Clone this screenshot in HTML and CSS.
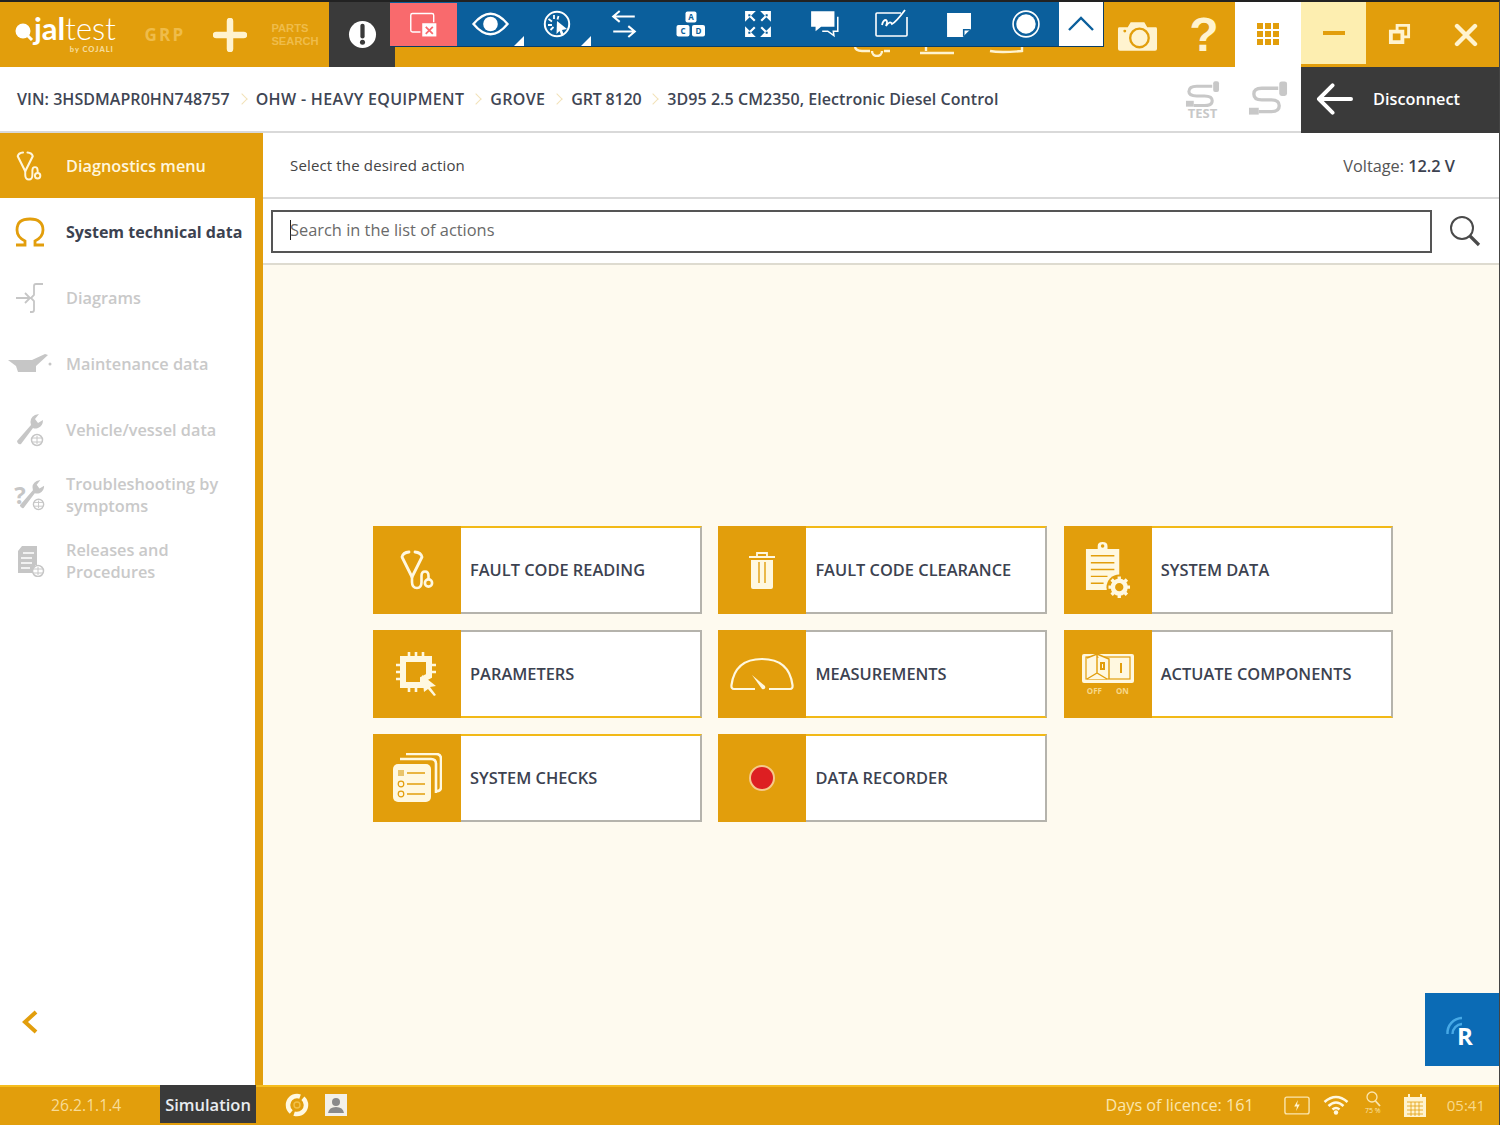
FILE: index.html
```html
<!DOCTYPE html>
<html lang="en">
<head>
<meta charset="utf-8">
<title>Jaltest</title>
<link rel="stylesheet" href="styles.css">
</head>
<body>
<svg class="defs" aria-hidden="true">
  <symbol id="stetho" viewBox="0 0 34 40">
    <path d="M2 7 Q3 2.500 9 2 M15 2 Q21 2.500 22 7 L12 27 L2 7" fill="none" stroke="currentColor" stroke-width="2.800" stroke-linejoin="round" stroke-linecap="round"/>
    <path d="M12 27 V32 Q12 38 17 38 Q21.500 38 21.500 32 V26 Q21.500 21.500 25 21.500 Q28.500 21.500 28.500 26 V29" fill="none" stroke="currentColor" stroke-width="2.600"/>
    <circle cx="28.500" cy="33" r="3.600" fill="none" stroke="currentColor" stroke-width="2.600"/>
  </symbol>
  <symbol id="wrench" viewBox="0 0 30 34">
    <path d="M2 28 L16 12 Q14 5 20 2 L24 1 L20 6 L23 10 L28 7 Q28 13 23 15 Q20 16 18 15 L6 31 Q3 32 2 28 Z" fill="currentColor"/>
    <circle cx="22" cy="27" r="5.500" fill="#fff" stroke="currentColor" stroke-width="1.500"/>
    <path d="M17 25 H27 M17 29 H27 M22 23 V31" stroke="currentColor" stroke-width="1"/>
  </symbol>
</svg>
<div class="app">
  <header class="topbar">
    <div class="logo">
      <svg class="logo-pin" viewBox="0 0 20 20"><circle cx="9" cy="9" r="7.500" fill="#fff"/><path d="M13 13 L18 18" stroke="#fff" stroke-width="3"/></svg>
      <div class="logo-words">
        <div class="logo-name"><b>jal</b>test</div>
        <div class="logo-by">by COJALI</div>
      </div>
    </div>
    <div class="top-cell grp">GRP</div>
    <div class="top-cell plus">
      <svg class="icon-plus" viewBox="0 0 34 34"><path d="M17 3 V31 M3 17 H31" stroke="#fff3cf" stroke-width="6.500" stroke-linecap="round"/></svg>
    </div>
    <div class="top-cell parts">PARTS<br>SEARCH</div>
    <div class="top-cell alert">
      <svg class="icon-alert" viewBox="0 0 30 30"><circle cx="15" cy="15" r="14" fill="#fff"/><path d="M15 6 V17" stroke="#3a3a3a" stroke-width="4.400" stroke-linecap="round"/><circle cx="15" cy="23" r="2.600" fill="#3a3a3a"/></svg>
    </div>
    <div class="top-spacer"></div>
    <div class="top-cell">
      <svg class="icon-camera" viewBox="0 0 42 32"><path d="M2 7 H11 L14 2 H28 L31 7 H40 Q41 7 41 9 V29 Q41 31 39 31 H3 Q1 31 1 29 V9 Q1 7 2 7 Z" fill="#fff3cf"/><circle cx="23" cy="18" r="9.500" fill="#fff3cf" stroke="#e29e0c" stroke-width="2.400"/><circle cx="8" cy="11" r="1.500" fill="#e29e0c"/></svg>
    </div>
    <div class="top-cell help">?</div>
    <div class="top-cell apps">
      <svg class="icon-apps" viewBox="0 0 24 24"><path d="M1 1h6v6H1zM9 1h6v6H9zM17 1h6v6h-6zM1 9h6v6H1zM9 9h6v6H9zM17 9h6v6h-6zM1 17h6v6H1zM9 17h6v6H9zM17 17h6v6h-6z" fill="#e29e0c"/></svg>
    </div>
    <div class="top-cell win-min"><span class="min-dash"></span></div>
    <div class="top-cell">
      <svg class="icon-restore" viewBox="0 0 24 24"><path d="M8 1 H23 V16 H17 V22 H1 V7 H8 Z" fill="#fff3cf"/><path d="M11 4 H20 V13 H17 V7 H11 Z M5 11 H13 V18 H5 Z" fill="#e29e0c"/></svg>
    </div>
    <div class="top-cell win-close">
      <svg class="icon-close" viewBox="0 0 24 24"><path d="M3 3 L21 21 M21 3 L3 21" stroke="#fff3cf" stroke-width="4.400" stroke-linecap="round"/></svg>
    </div>
    <svg class="peek" viewBox="0 0 180 12"><path d="M5 1 Q5 6 12 6 H20 M22 6 a5 5 0 0 0 10 0 M34 6 H40 M70 8 H104 M76 1 V6 M140 6 Q150 8 172 6 V1" fill="none" stroke="#fff3cf" stroke-width="2.400"/></svg>
    <nav class="toolbar">
      <div class="tool tool-red">
        <svg class="icon-tool" viewBox="0 0 34 30"><path d="M13 23 H4 Q2 23 2 21 V4 Q2 2 4 2 H26 Q28 2 28 4 V12" fill="none" stroke="#fff" stroke-width="1.600"/><rect x="15" y="13" width="16" height="15" fill="#fff"/><path d="M19 17 L27 25 M27 17 L19 25" stroke="#f96a6d" stroke-width="2"/></svg>
      </div>
      <div class="tool tool-corner">
        <svg class="icon-eye" viewBox="0 0 38 26"><path d="M1.500 13 Q19 -8 36.500 13 Q19 34 1.500 13 Z" fill="none" stroke="#fff" stroke-width="2.400"/><circle cx="19" cy="13" r="7.500" fill="#fff"/></svg>
      </div>
      <div class="tool tool-corner">
        <svg class="icon-tool" viewBox="0 0 28 28"><circle cx="14" cy="14" r="12.200" fill="none" stroke="#fff" stroke-width="2"/><path d="M14 11 L24 19 L19 20 L21 25 L18.500 26 L16.500 21 L13.500 24 Z" fill="#fff"/><path d="M11 5 V9 M5.500 9 L9 11.500 M5 15 H9 M7.500 20 L10.500 17 M15.500 6 L14.500 9.500" stroke="#fff" stroke-width="1.800"/></svg>
      </div>
      <div class="tool">
        <svg class="icon-tool" viewBox="0 0 24 26"><path d="M22 6 H3 M8 1 L2 6 L8 11 M2 20 H21 M16 15 L22 20 L16 25" fill="none" stroke="#fff" stroke-width="1.900"/></svg>
      </div>
      <div class="tool">
        <svg class="icon-abc" viewBox="0 0 30 26">
          <rect x="9.500" y="0.500" width="11" height="11" rx="2" fill="#fff"/><rect x="0.500" y="14" width="13" height="11.500" rx="2" fill="#fff"/><rect x="16" y="14" width="13" height="11.500" rx="2" fill="#fff"/>
          <text x="15" y="9" class="abc-text">A</text><text x="7" y="23" class="abc-text">C</text><text x="22.500" y="23" class="abc-text">D</text>
        </svg>
      </div>
      <div class="tool">
        <svg class="icon-tool" viewBox="0 0 26 26"><path d="M2 2 L10 10 M24 2 L16 10 M2 24 L10 16 M24 24 L16 16" stroke="#fff" stroke-width="2"/><path d="M1 11 V1 H11 Z M25 11 V1 H15 Z M1 15 V25 H11 Z M25 15 V25 H15 Z" fill="#fff"/><path d="M5 4 V5 H4 M21 4 V5 H22 M5 22 V21 H4 M21 22 V21 H22" stroke="#0b5f9c" stroke-width="1.800" fill="none"/></svg>
      </div>
      <div class="tool">
        <svg class="icon-tool" viewBox="0 0 27 25"><path d="M1 1 H22 V15 H10 L5 19 V15 H1 Z" fill="#fff"/><path d="M25 6 V19 H21 L21.500 23 L16 19 H11" fill="none" stroke="#fff" stroke-width="1.400"/></svg>
      </div>
      <div class="tool">
        <svg class="icon-sign" viewBox="0 0 33 29"><path d="M26 5 H2 Q1 5 1 6 V27 Q1 28 2 28 H31 Q32 28 32 27 V9" fill="none" stroke="#fff" stroke-width="1.600"/><path d="M7 17 Q8 12 11 12 Q13 13 11 18 Q15 12 17 16 Q21 14 30 2" fill="none" stroke="#fff" stroke-width="1.800"/></svg>
      </div>
      <div class="tool">
        <svg class="icon-note" viewBox="0 0 24 24"><path d="M1 1 H24 V16 L16 24 H1 Z" fill="#fff"/><path d="M17 23 V17 H23" fill="none" stroke="#0b5f9c" stroke-width="1.500"/></svg>
      </div>
      <div class="tool">
        <svg class="icon-rec" viewBox="0 0 26 26"><circle cx="13" cy="13" r="12" fill="none" stroke="#fff" stroke-width="1.500"/><circle cx="13" cy="13" r="9" fill="#fff"/></svg>
      </div>
      <div class="tool tool-up">
        <svg class="icon-up" viewBox="0 0 28 16"><path d="M2 14 L14 2 L26 14" fill="none" stroke="#0b5f9c" stroke-width="2.400"/></svg>
      </div>
    </nav>
  </header>

  <div class="crumbbar">
    <div class="crumbs">
      <span>VIN: 3HSDMAPR0HN748757</span><i class="chev"></i>
      <span class="crumb-wide">OHW - HEAVY EQUIPMENT</span><i class="chev"></i>
      <span class="crumb-wide">GROVE</span><i class="chev"></i>
      <span class="crumb-tight">GRT 8120</span><i class="chev"></i>
      <span>3D95 2.5 CM2350, Electronic Diesel Control</span>
    </div>
    <div class="plugs">
      <div class="plug-test">
        <svg class="icon-plug" viewBox="0 0 36 26"><path d="M28 5 H12 Q4 5 4 10.500 Q4 15 12 15 H20 Q28 15 28 20 Q28 25 20 25 H9" fill="none" stroke="#c8c8c8" stroke-width="3.200"/><rect x="29" y="0" width="6" height="11" rx="2" fill="#c8c8c8"/><rect x="1" y="20" width="8" height="6" fill="#c8c8c8"/></svg>
        <span class="plug-label">TEST</span>
      </div>
      <svg class="icon-plug2" viewBox="0 0 42 36"><path d="M31 8 H14 Q6 8 6 14 Q6 20 14 20 H24 Q32 20 32 26 Q32 32 24 32 H11" fill="none" stroke="#c8c8c8" stroke-width="3.400"/><rect x="32" y="1" width="8" height="15" rx="2.500" fill="#c8c8c8"/><rect x="1" y="28" width="10" height="7" fill="#c8c8c8"/></svg>
    </div>
    <div class="disconnect">
      <svg class="icon-back" viewBox="0 0 38 32"><path d="M36 16 H4 M17 2 L3 16 L17 30" fill="none" stroke="#fff" stroke-width="4" stroke-linecap="round" stroke-linejoin="round"/></svg>
      <span>Disconnect</span>
    </div>
  </div>

  <div class="main">
    <aside class="sidebar">
      <div class="side-head">
        <svg class="side-icon"><use href="#stetho"/></svg>
        <span>Diagnostics menu</span>
      </div>
      <div class="side-item active">
        <div class="side-ic omega">
          <svg viewBox="0 0 32 30"><path d="M2 28 H11 V24 Q3 20 3 13 Q3 2 16 2 Q29 2 29 13 Q29 20 21 24 V28 H30" fill="none" stroke="#e29e0c" stroke-width="2.800"/></svg>
        </div>
        <span>System technical data</span>
      </div>
      <div class="side-item">
        <div class="side-ic">
          <svg class="ic-diagram" viewBox="0 0 30 30"><path d="M1 15 H14 M10 10 L15 15 L10 20 M28 1 H21 Q19 1 19 3 V12 L16 15 L19 18 V27 Q19 29 17 29 H15" fill="none" stroke="#c6c6c6" stroke-width="1.800"/></svg>
        </div>
        <span>Diagrams</span>
      </div>
      <div class="side-item">
        <div class="side-ic">
          <svg class="ic-oil" viewBox="0 0 44 20"><path d="M0 6 L8 6 H24 L37 0 L40 1 L28 12 V18 H10 L8 12 Z" fill="#c6c6c6"/><circle cx="42" cy="10" r="1.500" fill="#c6c6c6"/></svg>
        </div>
        <span>Maintenance data</span>
      </div>
      <div class="side-item">
        <div class="side-ic">
          <svg class="ic-wrench"><use href="#wrench"/></svg>
        </div>
        <span>Vehicle/vessel data</span>
      </div>
      <div class="side-item multi">
        <div class="side-ic ic-trouble">
          <b>?</b>
          <svg class="ic-wrench-sm"><use href="#wrench"/></svg>
        </div>
        <span>Troubleshooting by symptoms</span>
      </div>
      <div class="side-item multi">
        <div class="side-ic">
          <svg class="ic-releases" viewBox="0 0 30 32"><path d="M7 1 H22 V20 H20 V28 H3 V6 Z" fill="#c6c6c6"/><path d="M8 8 H19 M6 13 H17 M6 18 H17 M6 23 H15" stroke="#fff" stroke-width="1.500"/><circle cx="23" cy="26" r="5.500" fill="#fff" stroke="#c6c6c6" stroke-width="1.500"/><path d="M18 24 H28 M18 28 H28 M23 22 V30" stroke="#c6c6c6"/></svg>
        </div>
        <span>Releases and Procedures</span>
      </div>
      <div class="side-collapse">
        <svg class="ic-collapse" viewBox="0 0 16 24"><path d="M14 2 L3 12 L14 22" fill="none" stroke="#e29e0c" stroke-width="4"/></svg>
      </div>
    </aside>

    <section class="content">
      <div class="content-head">
        <span class="hint">Select the desired action</span>
        <span class="voltage">Voltage: <b>12.2 V</b></span>
      </div>
      <div class="search-row">
        <div class="search-box"><span class="caret"></span><span>Search in the list of actions</span></div>
        <svg class="ic-search" viewBox="0 0 32 32"><circle cx="13" cy="13" r="11" fill="none" stroke="#4a4a4a" stroke-width="2"/><path d="M21 21 L30 30" stroke="#4a4a4a" stroke-width="3.200"/></svg>
      </div>
      <div class="actions-wrap">
        <div class="actions">
          <div class="card top-y">
            <div class="card-ic"><svg class="c-stetho"><use href="#stetho"/></svg></div>
            <span>FAULT CODE READING</span>
          </div>
          <div class="card top-y">
            <div class="card-ic">
              <svg class="c-trash" viewBox="0 0 28 38"><path d="M9 5 V2 H19 V5" fill="none" stroke="#fff8e0" stroke-width="1.800"/><path d="M1 6 H27" stroke="#fff8e0" stroke-width="2"/><path d="M3 9 H25 V36 Q25 38 23 38 H5 Q3 38 3 36 Z" fill="#fff8e0"/><path d="M11 11 V32 M17 11 V32" stroke="#e29e0c" stroke-width="1.400"/></svg>
            </div>
            <span>FAULT CODE CLEARANCE</span>
          </div>
          <div class="card top-y">
            <div class="card-ic">
              <svg class="c-clip" viewBox="0 0 48 60"><path d="M2 8 H14 V5 Q14 1 19 1 Q24 1 24 5 V8 H36 V50 H2 Z" fill="#fff8e0"/><path d="M7 15 H31 M7 22 H31 M7 29 H31 M7 36 H24 M7 43 H20" stroke="#e29e0c" stroke-width="1.500"/><circle cx="19" cy="5" r="1.800" fill="#e29e0c"/><circle cx="36" cy="47" r="13" fill="#e29e0c"/><circle cx="36" cy="47" r="6.500" fill="none" stroke="#fff8e0" stroke-width="4.500"/><path d="M36 36 V40 M36 54 V58 M25 47 H29 M43 47 H47 M28.200 39.200 L31 42 M41 52 L43.800 54.800 M43.800 39.200 L41 42 M31 52 L28.200 54.800" stroke="#fff8e0" stroke-width="3.400"/></svg>
            </div>
            <span>SYSTEM DATA</span>
          </div>
          <div class="card bot-y">
            <div class="card-ic">
              <svg class="c-chip" viewBox="0 0 42 44"><path d="M7 7 H33 V24 L27 27 V33 H7 Z" fill="none" stroke="#fff8e0" stroke-width="6"/><path d="M13 0 V6 M20 0 V6 M27 0 V6 M0 13 H6 M0 20 H6 M0 27 H6 M34 13 H40 M34 20 H40 M13 34 V40 M20 34 V40" stroke="#fff8e0" stroke-width="2.600"/><path d="M26 23 L40 34 L34 35 L40 43 L38 44 L32 37 L28 40 Z" fill="#fff8e0"/></svg>
            </div>
            <span>PARAMETERS</span>
          </div>
          <div class="card bot-y">
            <div class="card-ic">
              <svg class="c-gauge" viewBox="0 0 64 34"><path d="M25 32 H4 Q1 32 1.500 28 Q5 2 32 2 Q59 2 62.500 28 Q63 32 60 32 H39" fill="none" stroke="#fff8e0" stroke-width="2.200"/><path d="M22 18 L35 29 Q36 33 32 32 Z" fill="#fff8e0"/></svg>
            </div>
            <span>MEASUREMENTS</span>
          </div>
          <div class="card bot-y">
            <div class="card-ic card-ic-switch">
              <svg class="c-switch" viewBox="0 0 54 30"><rect x="1" y="1" width="52" height="29" rx="2" fill="#fff8e0"/><rect x="5" y="4" width="44" height="22" fill="none" stroke="#e29e0c" stroke-width="1.200"/><path d="M6 26 L16 20 L26 26 M6 5 L16 1 V20 M16 1 L28 6 V26" fill="#fff8e0" stroke="#e29e0c" stroke-width="1.400"/><path d="M40 10 V20 M20 10 V16 H23 V10 Z" stroke="#e29e0c" stroke-width="2" fill="none"/></svg>
              <div class="off-on"><span>OFF</span><span>ON</span></div>
            </div>
            <span>ACTUATE COMPONENTS</span>
          </div>
          <div class="card top-y">
            <div class="card-ic">
              <svg class="c-stack" viewBox="0 0 50 50"><path d="M14 1 H44 Q49 1 49 6 V34 Q49 38 45 38" fill="none" stroke="#fff8e0" stroke-width="2.600"/><path d="M8 6 H39 Q44 6 44 11 V40" fill="none" stroke="#fff8e0" stroke-width="2.600"/><rect x="1" y="11" width="38" height="38" rx="5" fill="#fff8e0"/><path d="M15 20 H33 M15 31 H33 M15 41 H33" stroke="#e29e0c" stroke-width="1.500"/><rect x="6" y="17" width="6" height="6" fill="#e9c46a"/><circle cx="9" cy="31" r="2.800" fill="none" stroke="#e29e0c" stroke-width="1.200"/><circle cx="9" cy="41" r="2.800" fill="none" stroke="#e29e0c" stroke-width="1.200"/></svg>
            </div>
            <span>SYSTEM CHECKS</span>
          </div>
          <div class="card top-y">
            <div class="card-ic"><span class="rec-dot"></span></div>
            <span>DATA RECORDER</span>
          </div>
        </div>
      </div>
    </section>
  </div>

  <footer class="statusbar">
    <div class="version">26.2.1.1.4</div>
    <div class="sim">Simulation</div>
    <div class="status-left">
      <svg class="ic-sync" viewBox="0 0 24 24"><circle cx="12" cy="12" r="9" fill="none" stroke="#fff8e0" stroke-width="4.500" stroke-dasharray="25 3.270" stroke-dashoffset="8"/><path d="M9 12 a3 3 0 0 1 6 0 a3 3 0 0 1 -6 0" fill="none" stroke="#f1c04a" stroke-width="1.400"/></svg>
      <svg class="ic-user" viewBox="0 0 22 22"><rect x="0" y="0" width="22" height="22" fill="#f3f0e8"/><circle cx="11" cy="8" r="4" fill="#8a8a8a"/><path d="M3 19 Q4 13 11 13 Q18 13 19 19 Z" fill="#8a8a8a"/></svg>
    </div>
    <div class="status-right">
      <span class="days">Days of licence: 161</span>
      <svg class="ic-batt" viewBox="0 0 28 20"><rect x="1" y="1" width="26" height="18" rx="2" fill="none" stroke="#fbe6ae" stroke-width="1.500"/><path d="M15 4 L11 11 H14 L13 16 L17 9 H14 Z" fill="#fff3cf"/></svg>
      <svg class="ic-wifi" viewBox="0 0 26 20"><path d="M1.500 7 Q13 -3 24.500 7 M5.500 11 Q13 4 20.500 11 M9.500 14.500 Q13 11.500 16.500 14.500" fill="none" stroke="#fff8e0" stroke-width="2.600"/><circle cx="13" cy="17.500" r="2.200" fill="#fff8e0"/></svg>
      <div class="zoomlevel">
        <svg class="ic-zoom" viewBox="0 0 16 16"><circle cx="7" cy="6" r="5" fill="none" stroke="#fbe6ae" stroke-width="1.300"/><path d="M10.500 10 L15 15" stroke="#fbe6ae" stroke-width="1.800"/></svg>
        <span>75 %</span>
      </div>
      <svg class="ic-cal" viewBox="0 0 24 24"><path d="M1 4 H5 V1 H7 V4 H17 V1 H19 V4 H23 V24 H1 Z" fill="#fff3cf"/><path d="M4 9 H20 M4 13 H20 M4 17 H20 M4 21 H20 M8 9 V23 M12 9 V23 M16 9 V23" stroke="#e29e0c" stroke-width="0.800"/></svg>
      <span class="clock">05:41</span>
    </div>
  </footer>

  <div class="r-button">
    <svg class="ic-r" viewBox="0 0 34 60"><path d="M2.500 34 A 15 15 0 0 1 17 18 M7.500 34 A 10 10 0 0 1 17 24" fill="none" stroke="#47a9e6" stroke-width="2.400"/><text x="12" y="45" class="r-letter">R</text></svg>
  </div>
</div>
</body>
</html>
```

FILE: styles.css
```css
* { box-sizing: border-box; }
html, body { margin: 0; padding: 0; }
body { font-family: "Open Sans", "Liberation Sans", sans-serif; color: #3c4250; background: #fff; }
.defs { position: absolute; width: 0; height: 0; }

.app { position: relative; width: 1500px; height: 1125px; display: flex; flex-direction: column; overflow: hidden; border-top: 2px solid #222; border-right: 1px solid #444; }

/* top bar */
.topbar { position: relative; display: flex; height: 65px; flex: none; background: #e29e0c; }
.top-cell { width: 66px; flex: none; display: flex; align-items: center; justify-content: center; }
.top-spacer { flex: 1; }
.logo { width: 129px; flex: none; display: flex; padding: 11px 0 0 14px; color: #fff; }
.logo-pin { width: 20px; height: 20px; margin-top: 9px; flex: none; }
.logo-name { font-family: Lato, "Open Sans", sans-serif; font-size: 31px; line-height: 30px; font-weight: 300; }
.logo-name b { font-weight: 700; }
.logo-by { font-family: Lato, "Open Sans", sans-serif; font-size: 7.500px; line-height: 9px; margin-top: 2px; font-weight: 900; letter-spacing: 1px; text-align: right; color: #f6dc9b; padding-right: 2px; }
.top-cell.grp { width: 67px; padding-left: 5px; font-size: 17px; font-weight: 700; letter-spacing: 2.200px; color: #efbc4a; }
.top-cell.plus { width: 68px; }
.icon-plus { width: 34px; height: 34px; }
.top-cell.parts { width: 65px; padding-right: 3px; font-family: "Liberation Sans", sans-serif; font-size: 11.200px; line-height: 13px; font-weight: 700; color: #efbc4a; text-align: left; }
.alert { background: #3a3a3a; }
.icon-alert { width: 29px; height: 29px; }
.icon-camera { width: 41px; height: 32px; margin-top: 2px; }
.top-cell.help { width: 65px; padding-left: 3px; font-size: 48px; font-weight: 700; line-height: 1; color: #fff3cf; font-family: "Liberation Sans", sans-serif; }
.apps { background: #fff; height: 66px; }
.icon-apps { width: 24px; height: 24px; margin-top: -2px; }
.top-cell.win-min { width: 65px; height: 62px; background: #fdeeb0; }
.min-dash { display: block; width: 22px; height: 4px; background: #e29e0c; }
.icon-restore { width: 23px; height: 23px; }
.top-cell.win-close { width: 67px; }
.icon-close { width: 24px; height: 24px; }
.peek { position: absolute; left: 850px; top: 43px; width: 180px; height: 12px; }

.toolbar { position: absolute; left: 390px; top: 0; width: 714px; height: 45px; display: flex; background: #0b5f9c; border-right: 1px solid #0b3d66; border-bottom: 1px solid #0b3d66; }
.tool { position: relative; width: 66.900px; flex: none; display: flex; align-items: center; justify-content: center; }
.tool.tool-red { width: 67px; background: #f96a6d; margin-top: 1px; }
.tool-corner::after { content: ""; position: absolute; right: 0; bottom: 0; width: 0; height: 0; border-style: solid; border-width: 0 0 10px 10px; border-color: transparent transparent #fff transparent; }
.tool.tool-up { width: 44px; background: #fff; }
.icon-tool { width: 30px; height: 28px; }
.icon-eye { width: 37px; height: 26px; }
.icon-note { width: 25px; height: 25px; }
.icon-rec { width: 28px; height: 28px; }
.icon-abc { width: 30px; height: 26px; }
.abc-text { font-family: "Open Sans", sans-serif; font-size: 8px; font-weight: 700; fill: #0b5f9c; text-anchor: middle; }
.icon-sign { width: 33px; height: 29px; margin-top: -3px; }
.icon-up { width: 28px; height: 16px; }

/* breadcrumb */
.crumbbar { height: 66px; flex: none; display: flex; align-items: stretch; background: #fff; border-bottom: 2px solid #d9d9d9; }
.crumbs { flex: 1; display: flex; align-items: center; padding-left: 17px; font-size: 16px; letter-spacing: 0.05px; font-weight: 600; color: #3f4654; white-space: nowrap; }
.crumb-wide { letter-spacing: 0.33px; }
.crumb-tight { letter-spacing: -0.2px; }
.chev { width: 26px; height: 12px; flex: none; position: relative; }
.chev::after { content: ""; position: absolute; left: 8px; top: 2px; width: 7px; height: 7px; border-top: 1.500px solid #f2e2b8; border-right: 1.500px solid #f2e2b8; transform: rotate(45deg); }
.plugs { display: flex; align-items: center; gap: 28px; padding-right: 12px; }
.plug-test { display: flex; flex-direction: column; align-items: center; width: 35px; margin-top: 2px; }
.icon-plug { width: 35px; height: 26px; }
.plug-label { font-size: 13px; line-height: 12px; font-weight: 700; color: #c8c8c8; }
.icon-plug2 { width: 41px; height: 36px; margin-top: -2px; }
.disconnect { width: 198px; margin-bottom: -2px; background: #3a3a3a; color: #fff; display: flex; align-items: center; padding: 0 0 2px 15px; gap: 20px; font-size: 16.300px; font-weight: 600; flex: none; }
.icon-back { width: 37px; height: 32px; flex: none; }

/* main */
.main { flex: 1; display: flex; min-height: 0; }
.sidebar { width: 263px; flex: none; display: flex; flex-direction: column; background: #fff; border-right: 8px solid #e29e0c; }
.side-head { height: 65px; flex: none; margin-right: -8px; background: #e29e0c; color: #fff6dc; display: flex; align-items: center; font-size: 16.300px; font-weight: 600; padding: 1px 0 0 16px; }
.side-head span { margin-left: 24px; }
.side-icon { width: 26px; height: 30px; flex: none; }
.side-item { height: 66px; flex: none; display: flex; align-items: center; font-size: 16.300px; font-weight: 600; color: #c9c9c9; line-height: 22px; padding: 1px 6px 0 0; }
.side-item.multi { padding-top: 0; padding-bottom: 1px; }
.side-item.active { color: #3c4250; font-size: 16.050px; font-weight: 700; }
.side-ic { width: 66px; flex: none; display: flex; align-items: center; justify-content: center; padding-right: 6px; }
.omega svg { width: 32px; height: 30px; }
.ic-diagram { width: 30px; height: 30px; }
.ic-oil { width: 44px; height: 20px; flex: none; }
.ic-wrench { width: 30px; height: 34px; color: #c6c6c6; }
.ic-trouble { color: #c6c6c6; position: relative; }
.ic-trouble b { font-size: 24px; line-height: 1; font-weight: 700; margin-right: -8px; }
.ic-wrench-sm { width: 28px; height: 32px; color: #c6c6c6; }
.ic-releases { width: 30px; height: 32px; }
.side-collapse { margin-top: auto; margin-bottom: 51px; padding-left: 22px; line-height: 0; }
.ic-collapse { width: 16px; height: 24px; }

/* content */
.content { flex: 1; display: flex; flex-direction: column; min-width: 0; background: #fefaef; }
.content-head { height: 66px; flex: none; display: flex; align-items: center; justify-content: space-between; padding: 0 44px 0 27px; background: #fff; border-bottom: 2px solid #d9d9d9; }
.hint { font-size: 15px; letter-spacing: 0.15px; color: #444; }
.voltage { font-size: 16.300px; color: #555; margin-top: 1px; }
.voltage b { font-weight: 600; color: #3c4250; }
.search-row { height: 66px; flex: none; display: flex; align-items: center; padding: 0 18px 0 8px; background: #fff; border-bottom: 2px solid #dedbd0; gap: 17px; }
.search-box { width: 1162px; height: 43px; border: 2px solid #555; display: flex; align-items: center; padding: 0 0 3px 17px; font-size: 16.400px; color: #6a6a6a; background: #fff; }
.caret { width: 1px; height: 20px; background: #222; flex: none; margin-right: -1px; }
.ic-search { width: 32px; height: 32px; flex: none; }
.actions-wrap { flex: 1; display: flex; align-items: center; padding: 0 0 2px 110px; }
.actions { display: grid; grid-template-columns: repeat(3, 329px); grid-auto-rows: 88px; gap: 16px 16.400px; }

.card { display: flex; align-items: center; background: #fff; border: 2px solid #b5b3ac; font-size: 16.400px; font-weight: 600; color: #3c4250; }
.card.top-y { border-top-color: #f2b917; }
.card.bot-y { border-bottom-color: #f2b917; }
.card-ic { width: 88px; flex: none; align-self: stretch; margin: -2px 0 -2px -2px; background: #e29e0c; display: flex; align-items: center; justify-content: center; }
.card > span { margin: 0 0 1px 9px; }
.c-stetho { width: 34px; height: 40px; color: #fff8e0; }
.c-trash { width: 28px; height: 38px; }
.c-clip { width: 47px; height: 59px; }
.c-chip { width: 42px; height: 44px; }
.c-gauge { width: 64px; height: 34px; }
.card-ic-switch { flex-direction: column; gap: 3px; }
.c-switch { width: 54px; height: 30px; }
.off-on { display: flex; gap: 14px; font-size: 8px; line-height: 9px; font-weight: 700; color: #f7d88a; }
.c-stack { width: 50px; height: 50px; }
.rec-dot { display: block; width: 26px; height: 26px; border-radius: 50%; background: #dd1f22; border: 2px solid #f6c98a; }

/* status bar */
.statusbar { height: 40px; flex: none; display: flex; align-items: center; background: #e29e0c; border-top: 2px solid #f6bd1e; padding-bottom: 2px; color: #fbe6ae; font-size: 16.200px; }
.version { width: 160px; padding-left: 51px; flex: none; font-size: 15.700px; color: #f8dc97; }
.sim { width: 96px; height: 38px; flex: none; align-self: flex-start; margin-top: -2px; background: #3a3a3a; color: #e8ecf0; font-size: 16.500px; font-weight: 600; display: flex; align-items: center; justify-content: center; }
.status-left { display: flex; align-items: center; gap: 16px; padding-left: 29px; }
.ic-sync { width: 24px; height: 24px; }
.ic-user { width: 22px; height: 22px; }
.status-right { margin-left: auto; display: flex; align-items: center; padding-right: 14px; }
.days { margin-right: 30px; }
.ic-batt { width: 26px; height: 19px; margin-right: 13px; }
.ic-wifi { width: 26px; height: 20px; margin-right: 13px; }
.zoomlevel { display: flex; flex-direction: column; align-items: center; width: 22px; margin-right: 19px; font-size: 7px; line-height: 8px; margin-top: -4px; }
.ic-zoom { width: 16px; height: 16px; }
.ic-cal { width: 24px; height: 24px; margin-right: 20px; }
.clock { font-size: 15px; color: #f8d98a; }

.r-button { position: absolute; right: 0; top: 991px; width: 74px; height: 73px; background: #0b6bb5; display: flex; align-items: center; justify-content: center; }
.ic-r { width: 34px; height: 60px; }
.r-letter { font-family: "Open Sans", sans-serif; font-size: 24px; font-weight: 700; fill: #fff; }
```
